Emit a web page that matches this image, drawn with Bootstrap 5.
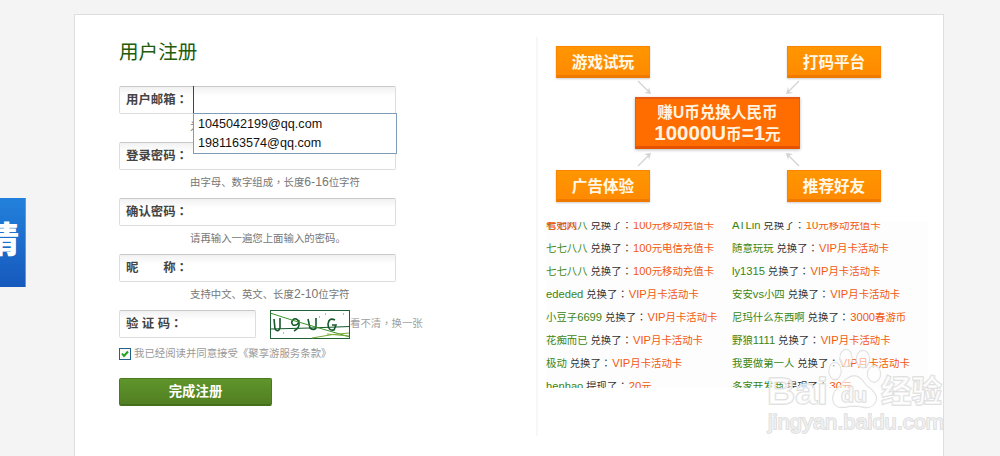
<!DOCTYPE html>
<html lang="zh-CN">
<head>
<meta charset="utf-8">
<title>用户注册</title>
<link href="https://cdn.jsdelivr.net/npm/bootstrap@5.3.0/dist/css/bootstrap.min.css" rel="stylesheet">
<style>
body{background:#f4f4f4;font-family:"Liberation Sans","Noto Sans CJK SC",sans-serif;font-size:10.4px;line-height:20px;height:456px;overflow:hidden;position:relative}
.panel{margin:14px 0 0 74px;width:870px;height:460px;background:#fff;border:1px solid #dedede}
.signup{width:418px;padding-left:44px;padding-top:22px}
.title{font-size:19.6px;line-height:30px;color:#215c0a;margin:0 0 19px;font-weight:400}
.slot{height:56px}
.field{height:28px;width:277px;border:1px solid #ddd;border-top-color:#c8c8c8;border-radius:2px;background:linear-gradient(#f1f1f1,#fff 9px);padding-left:6px;font-size:12.4px;font-weight:700;line-height:27px;color:#444;white-space:pre}
.short{width:137px}
.tip{margin-left:71px;line-height:26px;color:#777;white-space:nowrap}
.tip .la{font-size:12.2px}
.caret{left:74px;top:0;width:1px;height:27px;background:#444}
.menu-box{left:74px;top:27px;width:204px;height:41px;border:1px solid #7f9db9;background:#fff;color:#111;font-size:12.6px;line-height:19px;padding:1px 0 0 4px;z-index:5}
.gray{color:#a0a0a0}
.captcha-row{height:30px;margin-top:-1px}
.captcha{margin-left:14px}
.agree{height:24px;margin-top:3px;line-height:24px;color:#999}
.tick{width:12px;height:12px;border:1px solid #22618f;background:#f8f8f4;margin-right:3px}
.go{margin-top:12px;width:153px;height:28px;border:1px solid #4a7a20;border-bottom:2px solid #44701d;border-radius:2px;background:linear-gradient(#5f952b,#517f22);color:#fff;font-size:13.4px;font-weight:700;line-height:26px;padding:0}
.rule{width:2px;height:399px;margin:22px 8px 0 43px;background:#f7f7f7}
.diagram{width:382px;height:207px}
.node{width:94px;height:32px;background:linear-gradient(#ff9600,#ff8a00);border:1px solid #fb8500;border-bottom:3px solid #f07a00;box-shadow:0 1px 2px #ccc;color:#fff8e8;font-size:15.6px;font-weight:700;line-height:31px;text-align:center}
.core{left:89px;top:82px;width:165px;height:52px;background:#ff6c00;border:1px solid #f05c00;border-top:2px solid #e85a10;border-bottom:3px solid #e65300;box-shadow:0 1px 3px #bbb;color:#fff4e0;font-weight:700;text-align:center;font-size:15.6px;line-height:20px;padding-top:4px;white-space:nowrap}
.big-la{font-size:20.5px}
.feed{width:382px;height:166px;overflow:hidden;background:#fdfdfd}
.feed-col{width:186px;margin-top:-8px;line-height:23.1px;white-space:nowrap;color:#333}
.feed-col>div{height:23.05px}
.feed-col .mid{margin-right:1px}
.stale{left:0;top:0}
.who{color:#3b8511}.what{color:#f2590f}
.la{font-size:11.2px;line-height:1}
.mid{font-family:"Noto Sans CJK TC",sans-serif;line-height:1}
.side{left:0;top:198px;width:26px;height:89px;background:linear-gradient(#2281dc,#1659bc);border-right:1px solid #5a9be0;color:#fff;font-size:36px;font-weight:900;line-height:86px;padding-right:6px;overflow:hidden}
.wm{left:760px;top:342px}
</style>
<script src="https://cdn.jsdelivr.net/npm/bootstrap@5.3.0/dist/js/bootstrap.bundle.min.js"></script>
</head>
<body>
<aside class="side position-absolute d-flex justify-content-end"><span>请</span></aside>
<main class="panel d-flex">
 <form class="signup flex-shrink-0">
  <h1 class="title">用户注册</h1>
  <div class="slot position-relative"><div class="field mix">用户邮箱：</div><div class="tip">为</div>
   <div class="caret position-absolute"></div>
   <div class="menu-box position-absolute"><div>1045042199@qq.com</div><div>1981163574@qq.com</div></div>
  </div>
  <div class="slot"><div class="field mix">登录密码：</div><div class="tip mix">由字母、数字组成，长度6-16位字符</div></div>
  <div class="slot"><div class="field mix">确认密码：</div><div class="tip">请再输入一遍您上面输入的密码。</div></div>
  <div class="slot"><div class="field mix">昵　　称：</div><div class="tip mix">支持中文、英文、长度2-10位字符</div></div>
  <div class="captcha-row d-flex align-items-center text-nowrap"><div class="field short mix">验 证 码：</div>
   <svg class="captcha flex-shrink-0" width="80" height="29" viewBox="0 0 80 29"><rect x=".5" y=".5" width="79" height="28" fill="#fff" stroke="#206138"/>
    <g fill="none" stroke="#14592b" stroke-width="1.6"><path d="M4 9L5 19Q8 23 10 18V8M38 9L40 18Q44 21 46 18V8"/><path d="M29 12Q27 8 24 9Q20 12 23 15Q27 16 29 12Q30 18 24 21M65 10Q59 7 58 14Q58 21 64 20L66 15H62"/></g>
    <path d="M0 19L40 18L80 16.500" stroke="#14592b" fill="none"/><path d="M0 3L25 11L80 27" stroke="#3d922c" fill="none"/><path d="M42 28Q62 24 79 23M57 24L79 26" stroke="#77ac36" fill="none"/><path d="M55 4h1M73 4h1M61 20h1M13 23h1M49 7h1" stroke="#b34b85"/></svg>
   <span class="gray mix">看不清，换一张</span></div>
  <div class="agree d-flex align-items-center"><svg class="tick" viewBox="0 0 10 10"><path d="M2 4.500L4 7L8 2.500" fill="none" stroke="#21a121" stroke-width="2"/></svg><span>我已经阅读并同意接受《聚享游服务条款》</span></div>
  <button type="button" class="go d-block">完成注册</button>
 </form>
 <div class="rule flex-shrink-0"></div>
 <section class="flex-shrink-0">
  <div class="diagram position-relative">
   <svg class="position-absolute top-0 start-0" width="382" height="207" fill="none" stroke="#d2d2d2" stroke-width="1.3"><path d="M92 66L103 77M253 66L242 77M92 151L103 140M253 151L242 140"/><path fill="#d2d2d2" stroke="none" d="M105 79l-7-1l4-1.500l1-4.500zM240 79l7-1l-4-1.500l-1-4.500zM105 138l-7 1l4 1.500l1 4.500zM240 138l7 1l-4 1.500l-1 4.500z"/></svg>
   <div class="node position-absolute" style="left:10px;top:31px">游戏试玩</div><div class="node position-absolute" style="left:241px;top:31px">打码平台</div>
   <div class="core position-absolute"><div>赚U币兑换人民币</div><div><span class="big-la">10000U</span>币<span class="big-la">=1</span>元</div></div>
   <div class="node position-absolute" style="left:10px;top:155px">广告体验</div><div class="node position-absolute" style="left:241px;top:155px">推荐好友</div>
  </div>
  <div class="feed d-flex">
   <div class="feed-col flex-shrink-0 mix">
    <div class="position-relative"><span class="who">七七八八</span> 兑换了：<span class="what">100元移动充值卡</span><span class="what stale position-absolute">看她网</span></div>
    <div><span class="who">七七八八</span> 兑换了：<span class="what">100元电信充值卡</span></div>
    <div><span class="who">七七八八</span> 兑换了：<span class="what">100元移动充值卡</span></div>
    <div><span class="who">ededed</span> 兑换了：<span class="what">VIP月卡活动卡</span></div>
    <div><span class="who">小豆子6699</span> 兑换了：<span class="what">VIP月卡活动卡</span></div>
    <div><span class="who">花痴而已</span> 兑换了：<span class="what">VIP月卡活动卡</span></div>
    <div><span class="who">极动</span> 兑换了：<span class="what">VIP月卡活动卡</span></div>
    <div><span class="who">henhao</span> 提现了：<span class="what">20元</span></div>
   </div>
   <div class="feed-col flex-shrink-0 mix">
    <div><span class="who">ATLin</span> 兑换了：<span class="what">10元移动充值卡</span></div>
    <div><span class="who">随意玩玩</span> 兑换了：<span class="what">VIP月卡活动卡</span></div>
    <div><span class="who">ly1315</span> 兑换了：<span class="what">VIP月卡活动卡</span></div>
    <div><span class="who">安安vs小四</span> 兑换了：<span class="what">VIP月卡活动卡</span></div>
    <div><span class="who">尼玛什么东西啊</span> 兑换了：<span class="what">3000春游币</span></div>
    <div><span class="who">野狼1111</span> 兑换了：<span class="what">VIP月卡活动卡</span></div>
    <div><span class="who">我要做第一人</span> 兑换了：<span class="what">VIP月卡活动卡</span></div>
    <div><span class="who">多家开发商</span> 提现了：<span class="what">30元</span></div>
   </div>
  </div>
 </section>
</main>
<svg class="wm position-absolute" width="200" height="100" font-family="Liberation Sans, Noto Sans CJK SC, sans-serif" font-weight="700" fill="#fff" fill-opacity=".55" stroke="#dcdcdc" stroke-width="1.500" paint-order="stroke">
 <text x="7" y="62" font-size="36" textLength="61" lengthAdjust="spacingAndGlyphs">Bai</text>
 <g stroke-width="1.300"><ellipse cx="75" cy="29" rx="6" ry="8.500"/><ellipse cx="86" cy="16" rx="6" ry="8.500"/><ellipse cx="103" cy="17" rx="6.500" ry="8.500"/><ellipse cx="114" cy="32" rx="6.500" ry="8"/><path d="M84 39q11-10 19 0q2 4 9 9q7 7 3 13q-4 6-12 4q-9-2-17 0q-12 2-13-7q-1-6 4-11q4-3 7-8z"/></g>
 <text x="81" y="60" font-size="20" textLength="26" lengthAdjust="spacingAndGlyphs">du</text>
 <text x="121" y="60" font-size="31" textLength="61" lengthAdjust="spacingAndGlyphs">经验</text>
 <text x="8" y="87" font-size="20" font-weight="400" stroke-width="1.500" textLength="176" lengthAdjust="spacingAndGlyphs">jingyan.baidu.com</text>
</svg>
<script>
// Mixed-script text: Latin runs are set slightly larger, full-width colon and comma are centred in their cell.
document.querySelectorAll('.mix').forEach(function(el){
  var w=document.createTreeWalker(el,NodeFilter.SHOW_TEXT),n,list=[];
  while((n=w.nextNode()))list.push(n);
  list.forEach(function(t){
    if(!t.data.trim())return;
    var f=document.createDocumentFragment();
    t.data.split(/([A-Za-z0-9-]+|[：，])/).forEach(function(p){
      if(!p)return;
      var c=/^[A-Za-z0-9-]/.test(p)?'la':/^[：，]$/.test(p)?'mid':'';
      if(!c){f.append(p);return;}
      var s=document.createElement('span');s.className=c;s.textContent=p;
      if(c==='mid')s.lang='zh-TW';
      f.append(s);
    });
    t.replaceWith(f);
  });
});
</script>
</body>
</html>
